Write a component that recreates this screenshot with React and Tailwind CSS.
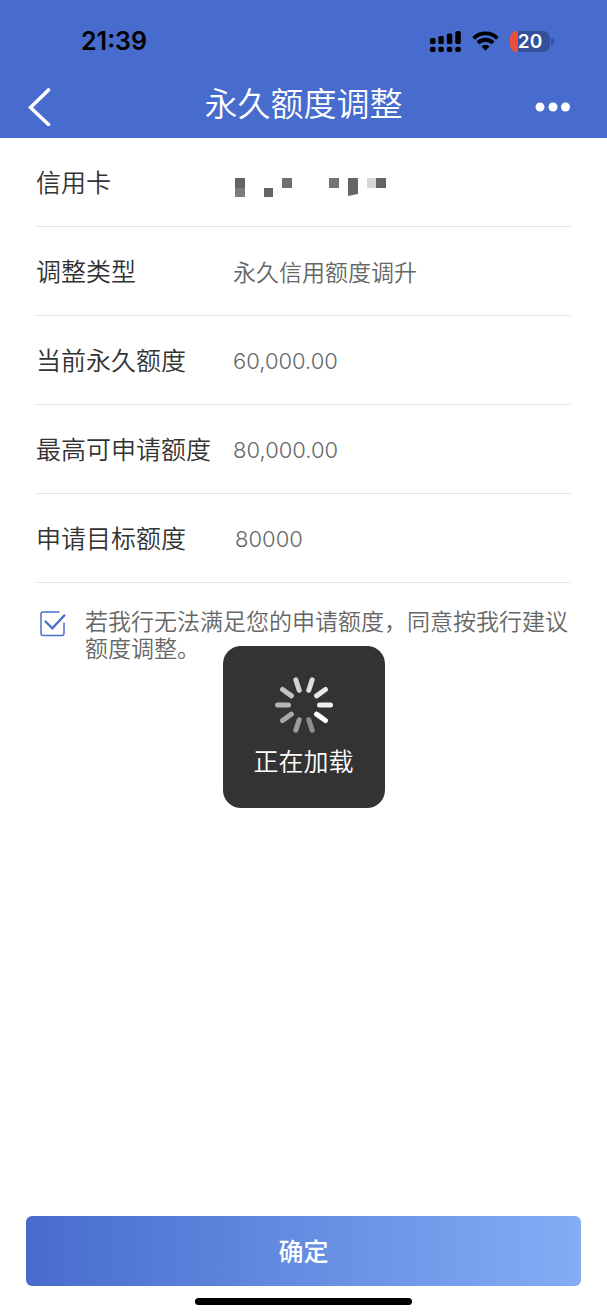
import { useState } from "react";

const rows = [
  { label: "调整类型", value: "永久信用额度调升", number: false },
  { label: "当前永久额度", value: "60,000.00", number: true },
  { label: "最高可申请额度", value: "80,000.00", number: true },
];

// spinner blades, clockwise from the right
const blades = [
  { angle: 0, color: "#f0f0f0" },
  { angle: 36, color: "#ffffff" },
  { angle: 72, color: "#8f8f8f" },
  { angle: 108, color: "#9c9c9c" },
  { angle: 144, color: "#a8a8a8" },
  { angle: 180, color: "#b5b5b5" },
  { angle: 216, color: "#c4c4c4" },
  { angle: 252, color: "#d2d2d2" },
  { angle: 288, color: "#dedede" },
  { angle: 324, color: "#e8e8e8" },
];

const SignalIcon = () => (
  <svg width="31" height="21" viewBox="0 0 31 21" fill="#000">
    <rect x="0" y="7" width="5.5" height="6" rx="1.5" />
    <rect x="8.3" y="5" width="5.5" height="8" rx="1.5" />
    <rect x="16.8" y="2.5" width="5.5" height="10.5" rx="1.5" />
    <rect x="25.3" y="0" width="5.5" height="13" rx="1.5" />
    <rect x="0" y="15.7" width="5.5" height="5.3" rx="1.7" />
    <rect x="8.3" y="15.7" width="5.5" height="5.3" rx="1.7" />
    <rect x="16.8" y="15.7" width="5.5" height="5.3" rx="1.7" />
    <rect x="25.3" y="15.7" width="5.5" height="5.3" rx="1.7" />
  </svg>
);

const WifiIcon = () => (
  <svg width="27" height="20" viewBox="0 0 27 20" fill="none" stroke="#000" strokeWidth="3.8">
    <path d="M1.6 7.3a17 17 0 0 1 23.8 0" />
    <path d="M5.9 11.9a10.8 10.8 0 0 1 15.2 0" />
    <path d="M13.5 19.8l-4-4.2a5.5 5.5 0 0 1 8 0z" fill="#000" stroke="none" />
  </svg>
);

const Battery = () => (
  <div className="flex items-center gap-px">
    <div className="flex h-[21px] w-10 items-center justify-center rounded-[7px] bg-linear-to-r from-[#ea4e3d] from-20% to-[#34509a] to-20% text-[19px] leading-[21px] font-semibold text-white">
      20
    </div>
    <div className="h-[7px] w-[3px] rounded-r-full bg-[#34509a]" />
  </div>
);

const Spinner = () => (
  <svg width="58" height="58" viewBox="-29 -29 58 58">
    {blades.map((b) => (
      <rect
        key={b.angle}
        x="13"
        y="-2.5"
        width="16"
        height="5"
        rx="2.5"
        fill={b.color}
        transform={`rotate(${b.angle})`}
      />
    ))}
  </svg>
);

// pixelated card number
const MaskedCard = () => (
  <svg
    width="154"
    height="20"
    viewBox="0 0 154 20"
    role="img"
    aria-label="信用卡"
  >
    <rect x="2" y="0" width="10" height="10" fill="#646464" />
    <rect x="2" y="10" width="10" height="9" fill="#7a7a7a" />
    <rect x="31" y="10" width="9" height="9" fill="#646464" />
    <rect x="49" y="0" width="10" height="10" fill="#707070" />
    <rect x="96" y="0" width="10" height="10" fill="#747474" />
    <path d="M115 0h10v16l-10 2z" fill="#666" />
    <rect x="134" y="0" width="9" height="10" fill="#d6d6d6" />
    <rect x="143" y="0" width="10" height="10" fill="#646464" />
  </svg>
);

const Header = () => (
  <header className="bg-[#486ccd]">
    <div className="flex h-[72px] items-center justify-between pt-[10px] pr-[53px] pl-[81px]">
      <span className="pt-0.5 text-[25px] font-semibold text-black">21:39</span>
      <div className="flex items-center gap-[11px]">
        <SignalIcon />
        <WifiIcon />
        <Battery />
      </div>
    </div>

    <div className="flex h-[66px] items-center justify-between px-7">
      <button type="button" aria-label="返回" className="w-11 pt-1">
        <svg width="24" height="38" viewBox="0 0 24 38" fill="none">
          <path
            d="M20.5 2L2.5 19.5L20.5 36.5"
            stroke="#fff"
            strokeWidth="3.6"
            strokeLinecap="round"
            strokeLinejoin="miter"
          />
        </svg>
      </button>
      <h1 className="text-[33px] font-[350] text-white">永久额度调整</h1>
      <button type="button" aria-label="更多" className="w-11 pt-1">
        <svg width="36" height="10" viewBox="0 0 36 10" fill="#fff">
          <circle cx="5" cy="5" r="4.5" />
          <circle cx="18" cy="5" r="4.5" />
          <circle cx="30.5" cy="5" r="4.5" />
        </svg>
      </button>
    </div>
  </header>
);

const Loading = () => (
  <div className="pointer-events-none absolute inset-0 flex items-center justify-center">
    <div
      role="status"
      className="flex size-[162px] flex-col items-center gap-3 rounded-[18px] bg-[#333] pt-[30px] text-[25px] leading-8 text-white"
    >
      <Spinner />
      正在加载
    </div>
  </div>
);

const App = () => {
  const [amount, setAmount] = useState("80000");
  const [agreed, setAgreed] = useState(true);

  return (
    <div className="flex min-h-screen flex-col bg-white font-['Inter','Noto_Sans_CJK_SC',sans-serif] font-[350]">
      <Header />

      <main className="relative flex flex-1 flex-col">
        <div className="px-9">
          <dl>
            <div className="flex h-[89px] items-center border-b border-[#e4e4e4] pt-1">
              <dt className="w-[197px] text-[25px] text-[#333]">信用卡</dt>
              <dd className="pt-2">
                <MaskedCard />
              </dd>
            </div>
            {rows.map((row) => (
              <div
                key={row.label}
                className="flex h-[89px] items-center border-b border-[#e4e4e4] pt-1"
              >
                <dt className="w-[197px] text-[25px] text-[#333]">{row.label}</dt>
                <dd
                  className={
                    row.number
                      ? "pb-0.5 text-[22px] text-[#666]"
                      : "text-[23px] text-[#666]"
                  }
                >
                  {row.value}
                </dd>
              </div>
            ))}
          </dl>

          <div className="flex h-[89px] items-center border-b border-[#e4e4e4] pt-1">
            <label htmlFor="amount" className="w-[197px] text-[25px] text-[#333]">
              申请目标额度
            </label>
            <input
              id="amount"
              type="text"
              inputMode="numeric"
              value={amount}
              onChange={(e) => setAmount(e.target.value)}
              className="min-w-0 flex-1 pb-0.5 pl-0.5 text-[22px] text-[#666] outline-none"
            />
          </div>

          <div className="flex pt-[26px]">
            <span className="relative ml-1 size-[26px] shrink-0">
              <input
                id="agree"
                type="checkbox"
                checked={agreed}
                onChange={(e) => setAgreed(e.target.checked)}
                className="block size-[26px] appearance-none"
              />
              <svg
                viewBox="0 0 26 26"
                fill="none"
                stroke="#4a6fd0"
                strokeLinecap="round"
                className="pointer-events-none absolute top-[2px] left-0 size-[26px]"
              >
                <path
                  d="M19 1H3Q1 1 1 3V22.500Q1 24.500 3 24.500H22Q24 24.500 24 22.500V12"
                  strokeWidth="1.5"
                />
                {agreed && <path d="M5.500 10.500L12.300 17.300L24.300 4.500" strokeWidth="2.4" />}
              </svg>
            </span>
            <label
              htmlFor="agree"
              className="ml-[19px] flex-1 text-[23px] leading-[27px] text-[#666]"
            >
              若我行无法满足您的申请额度，同意按我行建议额度调整。
            </label>
          </div>
        </div>

        <div className="mt-auto flex flex-col items-center px-[26px] pb-[11px]">
          <button
            type="button"
            className="h-[70px] w-full rounded-md bg-linear-to-r from-[#486ccd] to-[#83aef5] pt-1 text-[25px] font-medium text-white"
          >
            确定
          </button>
          <div className="mt-3 h-[7px] w-[217px] rounded-full bg-black" />
        </div>

        <Loading />
      </main>
    </div>
  );
};

export default App;
